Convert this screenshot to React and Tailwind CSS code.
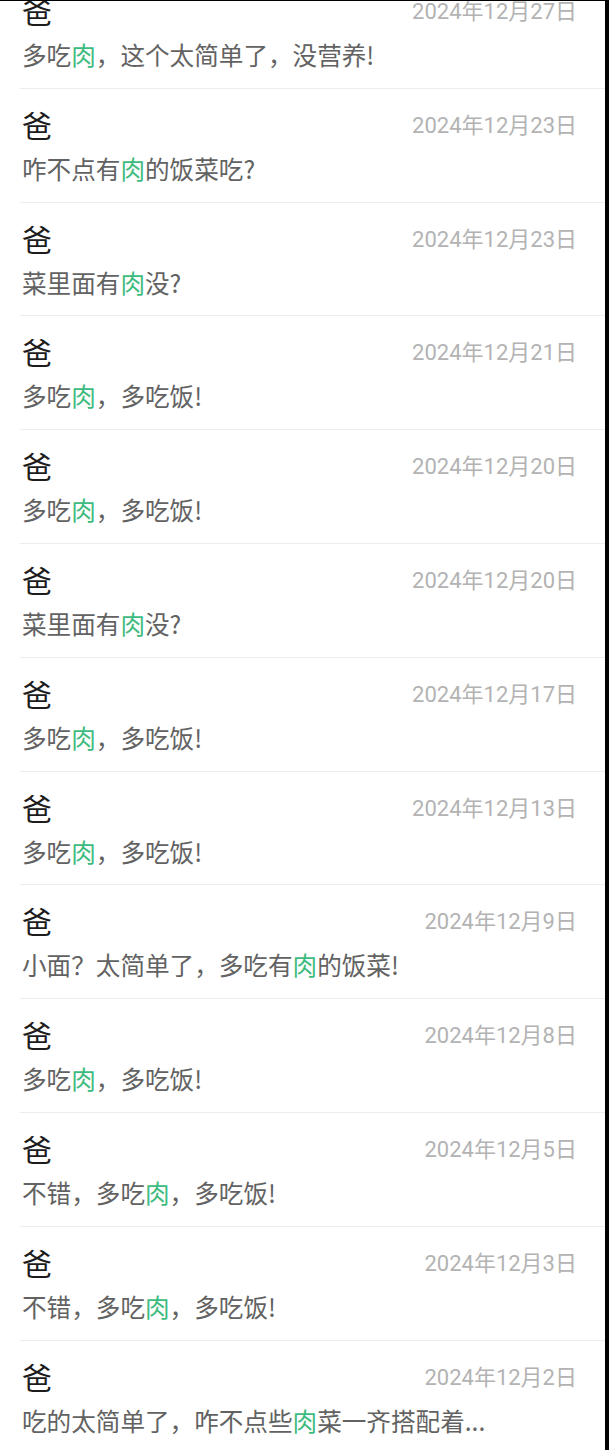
import React from 'react';

const rows = [
  { date: '2024年12月27日', pre: '多吃', post: '，这个太简单了，没营养!' },
  { date: '2024年12月23日', pre: '咋不点有', post: '的饭菜吃?' },
  { date: '2024年12月23日', pre: '菜里面有', post: '没?' },
  { date: '2024年12月21日', pre: '多吃', post: '，多吃饭!' },
  { date: '2024年12月20日', pre: '多吃', post: '，多吃饭!' },
  { date: '2024年12月20日', pre: '菜里面有', post: '没?' },
  { date: '2024年12月17日', pre: '多吃', post: '，多吃饭!' },
  { date: '2024年12月13日', pre: '多吃', post: '，多吃饭!' },
  { date: '2024年12月9日', pre: '小面？太简单了，多吃有', post: '的饭菜!' },
  { date: '2024年12月8日', pre: '多吃', post: '，多吃饭!' },
  { date: '2024年12月5日', pre: '不错，多吃', post: '，多吃饭!' },
  { date: '2024年12月3日', pre: '不错，多吃', post: '，多吃饭!' },
  { date: '2024年12月2日', pre: '吃的太简单了，咋不点些', post: '菜一齐搭配着...' },
];

const cjk = { fontFamily: '"Noto Sans CJK SC", "Noto Sans", sans-serif' };
const dateFont = { fontFamily: 'Roboto, "Noto Sans CJK SC", sans-serif' };

export default function App() {
  return (
    <div className="h-[1450px] w-full overflow-hidden bg-white border-t border-black flex" style={cjk}>
      <div className="flex-1 min-w-0">
        <div className="-mt-[26px]">
          {rows.map((r, i) => (
            <div
              key={i}
              className="ml-[20px] h-[113.8px] border-b border-[#ececec] pt-[17px] pl-[2px] pr-[28px]"
            >
              <div className="flex items-center justify-between h-[36px]">
                <span className="text-[30px] leading-[36px] text-[#1c1c1c]">爸</span>
                <span className="mt-[4px] text-[22px] leading-[28px] text-[#b3b3b3]" style={dateFont}>
                  {r.date}
                </span>
              </div>
              <div className="mt-[10px] text-[24.6px] leading-[32px] text-[#626262] whitespace-nowrap">
                {r.pre}
                <span className="text-[#3dbb7e]">肉</span>
                {r.post}
              </div>
            </div>
          ))}
        </div>
      </div>
      <div className="w-[4px] bg-black shrink-0" />
    </div>
  );
}
